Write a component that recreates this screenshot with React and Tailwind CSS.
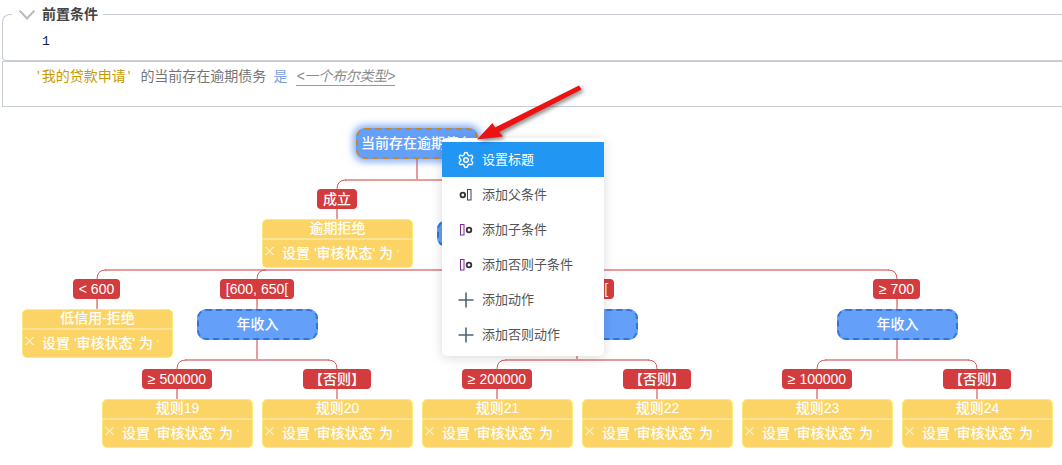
import React from 'react';
import { Settings } from 'lucide-react';

const FONT = "font-['Liberation_Sans','Noto_Sans_CJK_SC',sans-serif]";

const labels = [
  { text: '成立', cls: 'left-[317px] top-[82px] w-[40px]' },
  { text: '< 600', cls: 'left-[73px] top-[172px] w-[47px]' },
  { text: '[600, 650[', cls: 'left-[220px] top-[172px] w-[74px]' },
  { text: '[650, 700[', cls: 'left-[540px] top-[172px] w-[74px]' },
  { text: '≥ 700', cls: 'left-[873px] top-[172px] w-[47px]' },
  { text: '≥ 500000', cls: 'left-[142px] top-[262px] w-[70px]' },
  { text: '【否则】', cls: 'left-[303px] top-[262px] w-[68px]' },
  { text: '≥ 200000', cls: 'left-[462px] top-[262px] w-[70px]' },
  { text: '【否则】', cls: 'left-[623px] top-[262px] w-[68px]' },
  { text: '≥ 100000', cls: 'left-[782px] top-[262px] w-[70px]' },
  { text: '【否则】', cls: 'left-[943px] top-[262px] w-[68px]' },
];

const rules = [
  { title: '逾期拒绝', cls: 'left-[262px] top-[112px]' },
  { title: '低信用-拒绝', cls: 'left-[22px] top-[202px]' },
  { title: '规则19', cls: 'left-[102px] top-[292px]' },
  { title: '规则20', cls: 'left-[262px] top-[292px]' },
  { title: '规则21', cls: 'left-[422px] top-[292px]' },
  { title: '规则22', cls: 'left-[582px] top-[292px]' },
  { title: '规则23', cls: 'left-[742px] top-[292px]' },
  { title: '规则24', cls: 'left-[902px] top-[292px]' },
];

const conditions = [
  { text: '', cls: 'left-[437px] top-[113px] h-[27px]' },
  { text: '年收入', cls: 'left-[197px] top-[202px] h-[31px]' },
  { text: '年收入', cls: 'left-[517px] top-[202px] h-[31px]' },
  { text: '年收入', cls: 'left-[837px] top-[202px] h-[31px]' },
];

// connector pieces, page coordinates minus the canvas top (107)
const stems = [
  'M417 52V73', 'M345 73H489', 'M337 92V112', 'M497 73V113',
  'M497 140V163', 'M105 163H889', 'M97 191V202', 'M257 191V202', 'M577 191V202', 'M897 191V202',
  'M257 232V253', 'M185 253H329', 'M577 232V253', 'M505 253H649', 'M897 232V253', 'M825 253H969',
  'M177 281V292', 'M337 281V292', 'M497 281V292', 'M657 281V292', 'M817 281V292', 'M977 281V292',
];
const arcs = [
  'M337 82Q337 73 346 73', 'M497 82Q497 73 488 73',
  'M97 172Q97 163 106 163', 'M257 172Q257 163 266 163', 'M577 172Q577 163 586 163', 'M897 172Q897 163 888 163',
  'M177 262Q177 253 186 253', 'M337 262Q337 253 328 253',
  'M497 262Q497 253 506 253', 'M657 262Q657 253 648 253',
  'M817 262Q817 253 826 253', 'M977 262Q977 253 968 253',
];

function Label({ text, cls }) {
  return (
    <div className={`absolute ${cls} flex h-[20px] items-center justify-center whitespace-nowrap rounded-[4px] bg-[#d33c3e] text-[14px] font-medium leading-none text-white`}>
      {text}
    </div>
  );
}

function RuleNode({ title, cls }) {
  return (
    <div className={`absolute ${cls} h-[49px] w-[151px] overflow-hidden rounded-[5px] border border-[#fdea7e] bg-[#fcd466] text-[14px] text-white`}>
      <div className="h-[20px] border-b-2 border-[#fde29a] text-center font-medium leading-[17px]">{title}</div>
      <div className="relative flex h-[26px] items-center pl-[19px] font-medium whitespace-nowrap">
        <svg className="absolute left-[1px] top-[6px]" width="11" height="10" viewBox="0 0 11 10" fill="none" stroke="#fff" strokeWidth="1">
          <path d="M1.5 1L9.5 9M9.5 1L1.5 9" />
        </svg>
        <span>设置 '审核状态' 为 <span className="text-[10px] text-[#fff3c8]">'</span></span>
      </div>
    </div>
  );
}

function ConditionNode({ text, cls }) {
  return (
    <div className={`absolute ${cls} flex w-[121px] items-center justify-center rounded-[9px] border-2 border-dashed border-[#3374d6] bg-[#64a0fa] text-[14px] font-medium text-white`}>
      {text}
    </div>
  );
}

function ParentIcon() {
  return (
    <svg width="14" height="14" viewBox="0 0 14 14" fill="none">
      <circle cx="3.8" cy="7" r="2.3" stroke="#333" strokeWidth="1.8" />
      <rect x="8.5" y="1.5" width="3.5" height="10.5" stroke="#3a3a70" strokeWidth="1" />
    </svg>
  );
}

function ChildIcon() {
  return (
    <svg width="14" height="14" viewBox="0 0 14 14" fill="none">
      <rect x="1.5" y="1.5" width="3.5" height="10.5" stroke="#7a2a90" strokeWidth="1" />
      <circle cx="10" cy="7" r="2.3" stroke="#333" strokeWidth="1.8" />
    </svg>
  );
}

function PlusIcon() {
  return (
    <svg width="16" height="16" viewBox="0 0 16 16" fill="none" stroke="#4b6478" strokeWidth="1.6">
      <path d="M8 0.5V15.5M0.5 8H15.5" />
    </svg>
  );
}

const menuItems = [
  { text: '设置标题', icon: <Settings size={18} strokeWidth={1.9} />, active: true },
  { text: '添加父条件', icon: <ParentIcon /> },
  { text: '添加子条件', icon: <ChildIcon /> },
  { text: '添加否则子条件', icon: <ChildIcon /> },
  { text: '添加动作', icon: <PlusIcon /> },
  { text: '添加否则动作', icon: <PlusIcon /> },
];

function ContextMenu() {
  return (
    <div className="absolute left-[442px] top-[31px] w-[162px] overflow-hidden rounded-[5px] bg-white py-[4px] shadow-[0_2px_12px_rgba(0,0,0,0.15)]">
      {menuItems.map((item) => (
        <div
          key={item.text}
          className={`flex h-[35px] items-center text-[13px] ${item.active ? 'bg-[#2196f3] text-white' : 'text-[#555]'}`}
        >
          <span className="flex w-[40px] shrink-0 justify-center pl-[7px]">{item.icon}</span>
          <span>{item.text}</span>
        </div>
      ))}
    </div>
  );
}

export default function App() {
  return (
    <div className={`relative h-[465px] w-[1062px] overflow-hidden bg-white ${FONT}`}>
      {/* 前置条件 */}
      <div className="h-[14px]" />
      <div className="relative ml-[2px] h-[47px] rounded-tl-[8px] rounded-bl-[4px] border border-r-0 border-[#c8ccd4]">
        <div className="absolute left-[9px] top-[-9px] flex h-[17px] items-center bg-white pl-[7px] pr-[5px]">
          <svg className="mr-[7px]" width="16" height="10" viewBox="0 0 16 10" fill="none" stroke="#bbb" strokeWidth="2">
            <path d="M0.7 0.7L8 8.5L15.3 0.7" />
          </svg>
          <span className="text-[14px] font-bold text-[#444]">前置条件</span>
        </div>
        <div className="pl-[39px] pt-[19px] font-['Liberation_Mono',monospace] text-[13px] leading-[16px] text-[#0a2050]">1</div>
      </div>
      <div className="ml-[2px] h-[46px] border border-r-0 border-[#c8ccd4] pl-[34px] pt-[6px] text-[14px] leading-[17px]">
        <span className="text-[#c79a00]">'<span className="mx-[2px]">我的贷款申请</span>'</span>
        <span className="ml-[10px] text-[#757575]">的当前存在逾期债务</span>
        <span className="ml-[7px] text-[#7f9fe8]">是</span>
        <span className="ml-[9px] inline-block border-b border-[#999] text-[14px] italic leading-[17px] tracking-[-0.2px] text-[#8a8a8a]">&lt;一个布尔类型&gt;</span>
      </div>

      {/* 决策树 */}
      <div className="relative h-[358px]">
        <svg className="absolute inset-0" width="1062" height="358" fill="none">
          {stems.map((d) => <path key={d} d={d} stroke="#e99a9a" strokeWidth="2" />)}
          {arcs.map((d) => <path key={d} d={d} stroke="#d9585a" strokeWidth="1" />)}
        </svg>
        <div className="absolute left-[356px] top-[21px] flex h-[31px] w-[122px] items-center overflow-hidden whitespace-nowrap rounded-[9px] border-2 border-dashed border-[#c8862a] bg-[#64a0fa] pl-[3px] text-[14px] font-medium text-white shadow-[0_0_7px_3px_rgba(70,130,240,0.65)]">
          当前存在逾期债务
        </div>
        {conditions.map((c) => <ConditionNode key={c.cls} {...c} />)}
        {labels.map((l) => <Label key={l.cls} {...l} />)}
        {rules.map((r) => <RuleNode key={r.cls} {...r} />)}
        <ContextMenu />
      </div>

      {/* 标注箭头 */}
      <svg className="absolute left-0 top-0 drop-shadow-[2px_2px_2px_rgba(0,0,0,0.5)]" width="1062" height="465" fill="none">
        <path d="M477 139.5L492.5 123L495 127.5L579 85.5L581.5 89.5L499 132L503 136.5Z" fill="#ee1111" />
      </svg>
    </div>
  );
}
